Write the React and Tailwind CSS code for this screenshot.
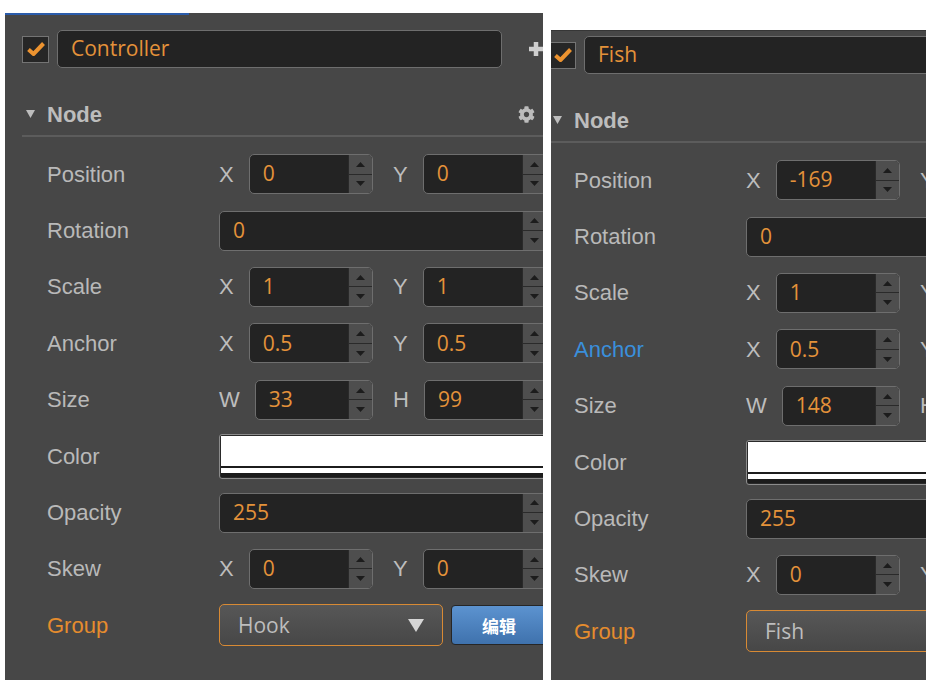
import { FaCog } from 'react-icons/fa';

const left = {
  name: 'Controller',
  position: ['0', '0'],
  rotation: '0',
  scale: ['1', '1'],
  anchor: ['0.5', '0.5'],
  size: ['33', '99'],
  opacity: '255',
  skew: ['0', '0'],
  group: 'Hook',
  anchorBlue: false,
};

const right = {
  name: 'Fish',
  position: ['-169', '0'],
  rotation: '0',
  scale: ['1', '1'],
  anchor: ['0.5', '0.5'],
  size: ['148', '64'],
  opacity: '255',
  skew: ['0', '0'],
  group: 'Fish',
  anchorBlue: true,
};

function Spinner() {
  return (
    <div className="w-[24px] h-full flex flex-col bg-[#4e4e4e] border-l border-[#2a2a2a]">
      <div className="flex-1 flex items-center justify-center border-b border-[#2a2a2a]">
        <svg width="9" height="5" viewBox="0 0 9 5">
          <path d="M0 5 L4.5 0 L9 5Z" fill="#1c1c1c" />
        </svg>
      </div>
      <div className="flex-1 flex items-center justify-center">
        <svg width="9" height="5" viewBox="0 0 9 5">
          <path d="M0 0 L4.5 5 L9 0Z" fill="#1c1c1c" />
        </svg>
      </div>
    </div>
  );
}

function NumField({ value }) {
  return (
    <div className="flex-1 h-[40px] flex rounded-[5px] border-[1.5px] border-[#6e6e6e] bg-[#232323] overflow-hidden">
      <div className="flex-1 flex items-center pl-[13px] text-[21px] text-[#e4923a] font-['Open_Sans',sans-serif]">
        {value}
      </div>
      <Spinner />
    </div>
  );
}

function Vec({ labels, values }) {
  return (
    <div className="w-[328px] flex gap-[20px]">
      {labels.map((l, i) => (
        <div key={l} className="w-[154px] flex items-center gap-[15px]">
          <span className="text-[22px] text-[#bdbdbd] font-['Liberation_Sans',Arial,sans-serif]">{l}</span>
          <NumField value={values[i]} />
        </div>
      ))}
    </div>
  );
}

function Row({ label, labelColor = 'text-[#b9b9b9]', children }) {
  return (
    <div className="h-[56.4px] flex items-center">
      <div className={`w-[214px] shrink-0 pl-[42px] text-[22px] font-['Liberation_Sans',Arial,sans-serif] ${labelColor}`}>
        {label}
      </div>
      {children}
    </div>
  );
}

function InspectorPanel({ data }) {
  return (
    <div className="w-[560px] flex flex-col">
      <div className="h-[2px] w-[184px] bg-[#2b5cab]" />

      {/* name row */}
      <div className="mt-[15px] h-[38px] flex items-center pl-[17px]">
        <div className="w-[27px] h-[27px] shrink-0 border-[1.5px] border-[#747474] bg-[#262626] flex items-center justify-center">
          <svg width="20" height="18" viewBox="0 0 20 18">
            <path d="M2.5 9.5 L7.5 14 L17.5 3.5" fill="none" stroke="#ec9330" strokeWidth="4" strokeLinejoin="round" />
          </svg>
        </div>
        <div className="ml-[8px] w-[445px] h-[38px] shrink-0 rounded-[5px] border-[1.5px] border-[#6e6e6e] bg-[#232323] flex items-center pl-[13px] text-[21px] text-[#e4923a] font-['Open_Sans',sans-serif]">
          {data.name}
        </div>
        <svg className="ml-[26px] shrink-0" width="16" height="16" viewBox="0 0 16 16">
          <path d="M8 1 V15 M1 8 H15" stroke="#cfcfcf" strokeWidth="4.5" />
        </svg>
      </div>

      {/* section header */}
      <div className="mt-[27px] h-[38px] flex items-center pl-[21px] pr-[30px]">
        <svg width="9" height="8" viewBox="0 0 9 8">
          <path d="M0 0 H9 L4.5 8Z" fill="#bdbdbd" />
        </svg>
        <span className="ml-[12px] text-[22px] font-bold text-[#bdbdbd] font-['Liberation_Sans',Arial,sans-serif]">Node</span>
        <FaCog className="ml-auto text-[#bcbcbc]" size={17} />
      </div>
      <div className="mt-[2px] ml-[17px] h-[2px] bg-[#5c5c5c]" />

      <div className="mt-[9px] flex flex-col">
        <Row label="Position">
          <Vec labels={['X', 'Y']} values={data.position} />
        </Row>
        <Row label="Rotation">
          <div className="w-[328px] flex">
            <NumField value={data.rotation} />
          </div>
        </Row>
        <Row label="Scale">
          <Vec labels={['X', 'Y']} values={data.scale} />
        </Row>
        <Row label="Anchor" labelColor={data.anchorBlue ? 'text-[#3a8fdb]' : 'text-[#b9b9b9]'}>
          <Vec labels={['X', 'Y']} values={data.anchor} />
        </Row>
        <Row label="Size">
          <Vec labels={['W', 'H']} values={data.size} />
        </Row>
        <Row label="Color">
          <div className="w-[328px] h-[45px] rounded-[3px] border-[1.5px] border-[#8c8c8c] bg-[#2a2a2a] p-[1px] flex flex-col">
            <div className="h-[30px] bg-white" />
            <div className="h-[2px] bg-[#1c1c1c]" />
            <div className="h-[5px] bg-white" />
            <div className="flex-1 bg-[#1c1c1c]" />
          </div>
        </Row>
        <Row label="Opacity">
          <div className="w-[328px] flex">
            <NumField value={data.opacity} />
          </div>
        </Row>
        <Row label="Skew">
          <Vec labels={['X', 'Y']} values={data.skew} />
        </Row>
        <Row label="Group" labelColor="text-[#e58c2e]">
          <div className="w-[328px] flex items-center">
            <div className="w-[224px] h-[42px] rounded-[5px] border-[1.5px] border-[#d88a34] bg-gradient-to-b from-[#575757] to-[#474747] flex items-center pl-[18px] pr-[18px]">
              <span className="flex-1 text-[21px] text-[#bdbdbd] font-['Open_Sans',sans-serif]">{data.group}</span>
              <svg width="16" height="13" viewBox="0 0 16 13">
                <path d="M0 0 H16 L8 13Z" fill="#d6d6d6" />
              </svg>
            </div>
            <div className="ml-[8px] w-[96px] h-[40px] rounded-[4px] border border-[#262626] bg-gradient-to-b from-[#5c93d0] to-[#3f72ad] flex items-center justify-center text-[17px] font-bold text-white font-['Noto_Sans_CJK_SC',sans-serif]">
              编辑
            </div>
          </div>
        </Row>
      </div>
    </div>
  );
}

export default function App() {
  return (
    <div className="w-[934px] h-[680px] bg-white flex overflow-hidden">
      <div className="w-[5px] shrink-0" />
      <div className="mt-[13px] w-[538px] h-[667px] shrink-0 overflow-hidden bg-[#474747]">
        <InspectorPanel data={left} />
      </div>
      <div className="w-[8px] shrink-0" />
      <div className="mt-[30px] w-[375px] h-[650px] shrink-0 overflow-hidden bg-[#474747] border-t border-[#363636]">
        <div className="-ml-[19px] -mt-[12px]">
          <InspectorPanel data={right} />
        </div>
      </div>
    </div>
  );
}
